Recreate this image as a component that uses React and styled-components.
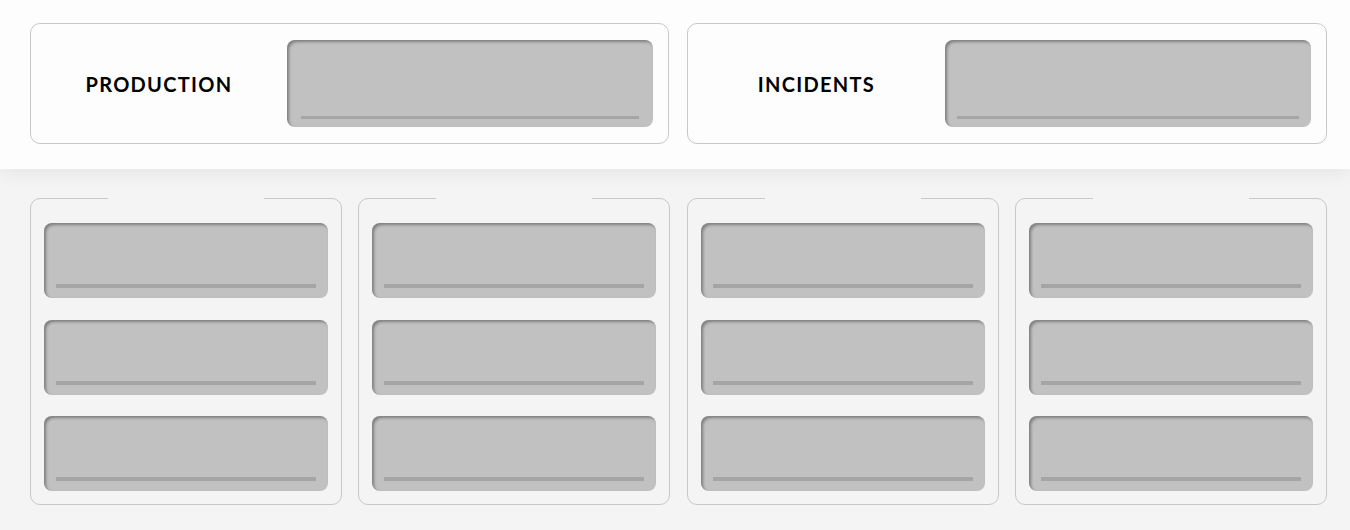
import React from "react";
import styled, { createGlobalStyle } from "styled-components";

const Global = createGlobalStyle`
  html, body { margin: 0; padding: 0; }
  body {
    background: #f4f4f4;
    font-family: Lato, "Liberation Sans", sans-serif;
  }
`;

const Page = styled.div`
  width: 1350px;
  height: 530px;
  background: #f4f4f4;
  overflow: hidden;
`;

const Header = styled.header`
  position: relative;
  z-index: 1;
  height: 169px;
  box-sizing: border-box;
  padding: 23px 23px 0 30px;
  background: #fdfdfd;
  box-shadow: 0 3px 18px rgba(0, 0, 0, 0.07);
  display: grid;
  grid-template-columns: 639px 640px;
  column-gap: 18px;
  align-items: start;
`;

const StatCard = styled.section`
  height: 121px;
  box-sizing: border-box;
  border: 1px solid #c8c8c8;
  border-radius: 10px;
  background: #fdfdfd;
  display: grid;
  grid-template-columns: 1fr 366px;
  align-items: center;
  padding: 16px 15px 16px 0;
`;

const Label = styled.h2`
  margin: 0;
  text-align: center;
  font-family: Lato, "Liberation Sans", sans-serif;
  font-weight: 700;
  font-size: 20px;
  letter-spacing: 1.3px;
  color: #000;
`;

const Placeholder = styled.div`
  height: ${(p) => p.$h}px;
  box-sizing: border-box;
  border-radius: 8px;
  background: #c1c1c1;
  box-shadow: inset 2px 2px 3px rgba(0, 0, 0, 0.35);
  display: flex;
  align-items: flex-end;
  padding: 0 ${(p) => p.$inset}px ${(p) => p.$bottom}px;
`;

const Bar = styled.div`
  flex: 1;
  height: ${(p) => p.$thick}px;
  background: #a5a5a5;
`;

const Board = styled.main`
  padding: 29px 23px 0 30px;
  display: grid;
  grid-template-columns: repeat(4, 312px);
  column-gap: 16.33px;
`;

const Column = styled.div`
  position: relative;
  height: 307px;
  box-sizing: border-box;
  border: 1px solid #c8c8c8;
  border-radius: 10px;
  padding: 24px 13px 13px;
  display: flex;
  flex-direction: column;
  gap: 21.5px;
`;

const Notch = styled.div`
  position: absolute;
  top: -17px;
  left: 50%;
  transform: translateX(-50%);
  width: 156px;
  height: 28px;
  background: #f4f4f4;
`;

function Field({ h, inset, bottom, thick }) {
  return (
    <Placeholder $h={h} $inset={inset} $bottom={bottom}>
      <Bar $thick={thick} />
    </Placeholder>
  );
}

export default function App() {
  const cols = [0, 1, 2, 3];
  return (
    <Page>
      <Global />
      <Header>
        <StatCard>
          <Label>PRODUCTION</Label>
          <Field h={87} inset={14} bottom={8} thick={3} />
        </StatCard>
        <StatCard>
          <Label>INCIDENTS</Label>
          <Field h={87} inset={12} bottom={8} thick={3} />
        </StatCard>
      </Header>
      <Board>
        {cols.map((c) => (
          <Column key={c}>
            <Notch />
            <Field h={75} inset={12} bottom={10} thick={4} />
            <Field h={75} inset={12} bottom={10} thick={4} />
            <Field h={75} inset={12} bottom={10} thick={4} />
          </Column>
        ))}
      </Board>
    </Page>
  );
}
